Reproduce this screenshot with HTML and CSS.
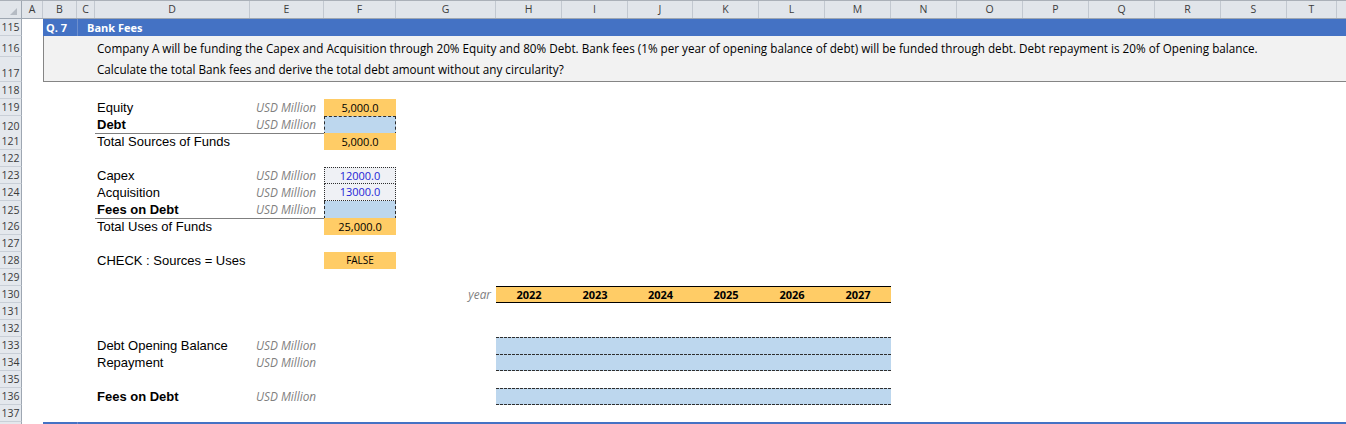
FILE: index.html
```html
<!DOCTYPE html>
<html>
<head>
<meta charset="utf-8">
<title>Bank Fees</title>
<link rel="stylesheet" href="styles.css">
</head>
<body>
<div class="sheet">
  <div class="colhdr">
    <div class="corner"></div>
    <div>A</div><div>B</div><div>C</div><div>D</div><div>E</div><div>F</div><div>G</div>
    <div>H</div><div>I</div><div>J</div><div>K</div><div>L</div><div>M</div><div>N</div>
    <div>O</div><div>P</div><div>Q</div><div>R</div><div>S</div><div>T</div><div class="last"></div>
  </div>

  <div class="row">
    <div class="rn">115</div>
    <div class="qnum">Q. 7</div>
    <div class="qtitle">Bank Fees</div>
  </div>

  <div class="desc">
    <div class="rn rn-a">116</div>
    <div class="rn rn-b">117</div>
    <div class="descbox">
      <div>Company A will be funding the Capex and Acquisition through 20% Equity and 80% Debt. Bank fees (1% per year of opening balance of debt) will be funded through debt. Debt repayment is 20% of Opening balance.</div>
      <div>Calculate the total Bank fees and derive the total debt amount without any circularity?</div>
    </div>
  </div>

  <div class="row"><div class="rn">118</div></div>
  <div class="row">
    <div class="rn">119</div>
    <div class="lbl">Equity</div>
    <div class="unit">USD Million</div>
    <div class="val org">5,000.0</div>
  </div>
  <div class="row">
    <div class="rn">120</div>
    <div class="lbl b">Debt</div>
    <div class="unit">USD Million</div>
    <div class="val calc">&nbsp;</div>
  </div>
  <div class="row">
    <div class="rn">121</div>
    <div class="lbl total">Total Sources of Funds</div>
    <div class="val org">5,000.0</div>
  </div>
  <div class="row"><div class="rn">122</div></div>
  <div class="row">
    <div class="rn">123</div>
    <div class="lbl">Capex</div>
    <div class="unit">USD Million</div>
    <div class="val input">12000.0</div>
  </div>
  <div class="row">
    <div class="rn">124</div>
    <div class="lbl">Acquisition</div>
    <div class="unit">USD Million</div>
    <div class="val input next">13000.0</div>
  </div>
  <div class="row">
    <div class="rn">125</div>
    <div class="lbl b">Fees on Debt</div>
    <div class="unit">USD Million</div>
    <div class="val calc next">&nbsp;</div>
  </div>
  <div class="row">
    <div class="rn">126</div>
    <div class="lbl total">Total Uses of Funds</div>
    <div class="val org">25,000.0</div>
  </div>
  <div class="row"><div class="rn">127</div></div>
  <div class="row">
    <div class="rn">128</div>
    <div class="lbl">CHECK : Sources = Uses</div>
    <div class="val org small">FALSE</div>
  </div>
  <div class="row"><div class="rn">129</div></div>
  <div class="row">
    <div class="rn">130</div>
    <div class="yearlbl">year</div>
    <div class="yr ch">2022</div>
    <div class="yr ci">2023</div>
    <div class="yr cj">2024</div>
    <div class="yr ck">2025</div>
    <div class="yr cl">2026</div>
    <div class="yr cm">2027</div>
  </div>
  <div class="row"><div class="rn">131</div></div>
  <div class="row"><div class="rn">132</div></div>
  <div class="row">
    <div class="rn">133</div>
    <div class="lbl">Debt Opening Balance</div>
    <div class="unit">USD Million</div>
    <div class="band dash-t"></div>
  </div>
  <div class="row">
    <div class="rn">134</div>
    <div class="lbl">Repayment</div>
    <div class="unit">USD Million</div>
    <div class="band dash-tb"></div>
  </div>
  <div class="row"><div class="rn">135</div></div>
  <div class="row">
    <div class="rn">136</div>
    <div class="lbl b">Fees on Debt</div>
    <div class="unit">USD Million</div>
    <div class="band dash-tb"></div>
  </div>
  <div class="row"><div class="rn">137</div></div>
  <div class="row">
    <div class="rn"></div>
    <div class="qnum"></div>
    <div class="qtitle"></div>
  </div>
</div>
</body>
</html>
```

FILE: styles.css
```css
:root {
  --cols: 22px 21px 34px 18px 155px 74px 72px 100px 66px 66px 65px 66px 66px 66px 66px 66px 66px 66px 66px 66px 50px 1fr;
  --orange: #ffcc66;
  --lblue: #bdd7ee;
  --hblue: #4472c4;
}

body {
  margin: 0;
  background: #fff;
  font-family: "Open Sans", Lato, "Liberation Sans", sans-serif;
  font-size: 11px;
  color: #000;
  overflow: hidden;
}

.sheet {
  width: 1346px;
  height: 424px;
  overflow: hidden;
}

/* column header */
.colhdr {
  display: grid;
  grid-template-columns: var(--cols);
  height: 19px;
  box-sizing: border-box;
  border-top: 1px solid #aab0b8;
  border-bottom: 1px solid #9ea7b2;
  background: #e1e5ea;
}
.colhdr > div {
  border-right: 1px solid #c2c8d0;
  text-align: center;
  line-height: 17px;
  color: #3c3c3c;
  font-size: 10.5px;
}
.colhdr > .last { border-right: none; }
.colhdr > .corner {
  display: flex;
  align-items: flex-end;
  justify-content: flex-end;
  padding: 0 4px 3px 0;
  border-right: 1px solid #9ea7b2;
}
.corner::after {
  content: "";
  width: 0;
  height: 0;
  border-left: 7px solid transparent;
  border-bottom: 7px solid #b5bbc3;
}

/* rows */
.row {
  display: grid;
  grid-template-columns: var(--cols);
  height: 17px;
}
.row > * { grid-row: 1; }

.rn {
  grid-column: 1;
  background: #e4e8ed;
  border-right: 1px solid #9ea7b2;
  border-bottom: 1px solid #c9cfd7;
  box-sizing: border-box;
  color: #3a3a3a;
  font-size: 10.5px;
  display: flex;
  align-items: flex-end;
  justify-content: center;
  padding-bottom: 1px;
  line-height: 13px;
}

/* question header band */
.qnum {
  grid-column: 3;
  background: var(--hblue);
  color: #fff;
  font-weight: bold;
  padding-left: 3px;
  line-height: 17px;
  font-size: 11px;
}
.qtitle {
  grid-column: 4 / -1;
  background: var(--hblue);
  color: #fff;
  font-weight: bold;
  padding-left: 9px;
  line-height: 17px;
  font-size: 11px;
  border-left: 1px solid #6d8fce;
}

/* description block */
.desc {
  display: grid;
  grid-template-columns: var(--cols);
  grid-template-rows: 21px 25px;
}
.rn-a { grid-row: 1; }
.rn-b { grid-row: 2; padding-bottom: 1px; }
.descbox {
  grid-column: 3 / -1;
  grid-row: 1 / 3;
  background: #f2f2f2;
  border-left: 1px solid #858585;
  border-bottom: 1px solid #858585;
  box-sizing: border-box;
  padding-left: 53px;
  display: flex;
  flex-direction: column;
  justify-content: center;
  line-height: 21px;
  font-size: 11.7px;
  white-space: nowrap;
}

/* labels & values */
.lbl {
  grid-column: 5;
  font-family: "Liberation Sans", Arial, sans-serif;
  font-size: 13px;
  line-height: 17px;
  padding-left: 2px;
  white-space: nowrap;
}
.lbl.b { font-weight: bold; }
.lbl.total {
  grid-column: 5 / 7;
  border-top: 1px solid #7f7f7f;
  line-height: 16px;
}

.unit {
  grid-column: 6;
  font-style: italic;
  color: #808080;
  padding-left: 6px;
  line-height: 17px;
  font-size: 11.8px;
  white-space: nowrap;
}

.val {
  grid-column: 7;
  text-align: center;
  line-height: 17px;
  font-size: 11px;
  box-sizing: border-box;
}
.org { background: var(--orange); }
.val.small { font-size: 10px; }
.calc {
  background: var(--lblue);
  border: 1px dashed #2e2e2e;
}
.input {
  background: #eff1f5;
  border: 1px dotted #2e2e2e;
  color: #1d1dd6;
  line-height: 15px;
}
.next { border-top: none; }
.input.next { line-height: 16px; }

/* year row */
.yearlbl {
  grid-column: 8;
  text-align: right;
  padding-right: 5px;
  font-style: italic;
  color: #808080;
  line-height: 17px;
  font-size: 11.8px;
}
.yr {
  background: var(--orange);
  border-top: 1px solid #000;
  border-bottom: 1px solid #000;
  box-sizing: border-box;
  font-weight: bold;
  text-align: center;
  line-height: 15px;
}
.ch { grid-column: 9; }
.ci { grid-column: 10; }
.cj { grid-column: 11; }
.ck { grid-column: 12; }
.cl { grid-column: 13; }
.cm { grid-column: 14; }

/* input bands H..M */
.band {
  grid-column: 9 / 15;
  background-color: var(--lblue);
  background-repeat: no-repeat;
}
.dash-t {
  background-image: repeating-linear-gradient(90deg, #2e2e2e 0 3px, transparent 3px 4px);
  background-size: 100% 1px;
  background-position: 0 0;
}
.dash-tb {
  background-image:
    repeating-linear-gradient(90deg, #2e2e2e 0 3px, transparent 3px 4px),
    repeating-linear-gradient(90deg, #2e2e2e 0 3px, transparent 3px 4px);
  background-size: 100% 1px, 100% 1px;
  background-position: 0 0, 0 100%;
}
```
